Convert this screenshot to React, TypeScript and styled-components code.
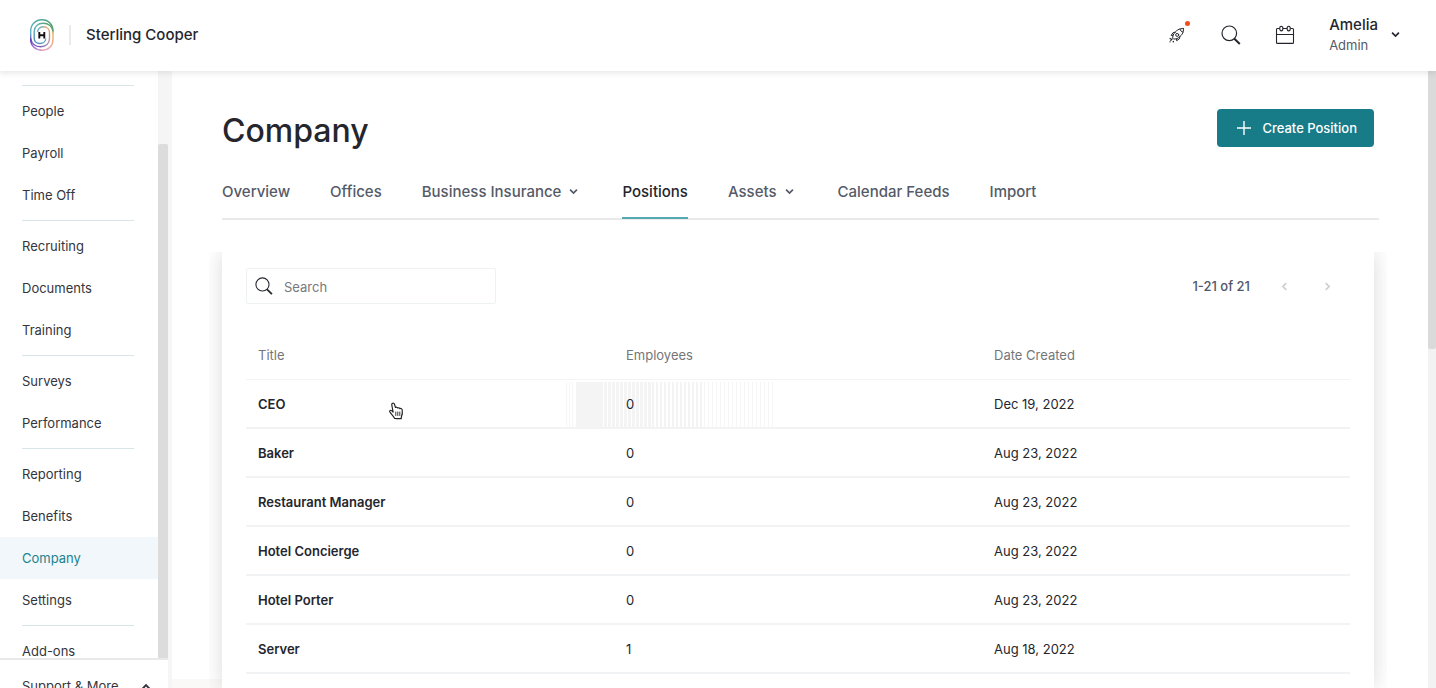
import React from "react";
import styled, { createGlobalStyle, css } from "styled-components";

const Global = createGlobalStyle`
  *, *::before, *::after { box-sizing: border-box; }
  body {
    margin: 0;
    background: #fff;
    color: #25262d;
    font-family: Inter, "Liberation Sans", sans-serif;
    font-size: 13px;
    line-height: 20px;
  }
  a { color: inherit; text-decoration: none; }
  button { font: inherit; color: inherit; background: none; border: 0; padding: 0; cursor: pointer; }
`;

const Page = styled.div`
  height: 100vh;
  display: flex;
  flex-direction: column;
  overflow: hidden;
`;

const Header = styled.header`
  flex: none;
  height: 71px;
  display: flex;
  align-items: center;
  padding: 0 36px 2px 28px;
  background: #fff;
  box-shadow: 0 1px 6px 1px rgba(0, 0, 0, 0.1);
  z-index: 2;
`;

const Brand = styled.a`
  display: flex;
  align-items: center;
  font-size: 15px;
  font-weight: 500;
`;

const BrandDivider = styled.span`
  width: 2px;
  height: 20px;
  margin: 0 15px 0 14px;
  background: #ebebed;
`;

const HeaderActions = styled.div`
  margin-left: auto;
  display: flex;
  align-items: center;
  gap: 30px;
`;

const IconButton = styled.button`
  position: relative;
  width: 24px;
  height: 24px;
  display: grid;
  place-items: center;
`;

const Dot = styled.span`
  position: absolute;
  top: -2px;
  right: -1px;
  width: 5px;
  height: 5px;
  border-radius: 50%;
  background: #f04e16;
`;

const Account = styled.button`
  display: flex;
  align-items: center;
  gap: 13px;
  margin-left: 2px;
  text-align: left;
`;

const AccountName = styled.span`
  display: block;
  font-size: 15px;
  font-weight: 500;
`;

const AccountRole = styled.span`
  display: block;
  color: #555a68;
`;

const Body = styled.div`
  flex: 1;
  min-height: 0;
  display: flex;
`;

const Sidebar = styled.aside`
  flex: none;
  width: 168px;
  display: flex;
  flex-direction: column;
`;

const SidebarScroll = styled.div`
  flex: 1;
  min-height: 0;
  display: flex;
  overflow: hidden;
`;

const Nav = styled.nav`
  flex: 1;
  padding-top: 10px;
`;

const NavGroup = styled.div`
  &::before {
    content: "";
    display: block;
    height: 1px;
    margin: 4px 24px 4px 22px;
    background: #d7e5e9;
  }
`;

const NavLink = styled.a<{ $active?: boolean }>`
  display: flex;
  align-items: center;
  height: 42px;
  padding-left: 22px;
  color: ${(p) => (p.$active ? "#1b8390" : "#34353c")};
  background: ${(p) => (p.$active ? "#f1f7fa" : "transparent")};
`;

const SidebarTrack = styled.div`
  width: 10px;
  padding-top: 73px;
  display: flex;
  background: #f5f5f5;
  &::before {
    content: "";
    flex: 1;
    background: #dcdcdc;
    border-radius: 2px 2px 0 0;
  }
`;

const Support = styled.button`
  flex: none;
  height: 30px;
  overflow: hidden;
  display: flex;
  align-items: flex-start;
  justify-content: space-between;
  padding: 16px 17px 0 22px;
  border-top: 2px solid #e9e9e9;
  color: #34353c;
  svg { margin-top: 6px; }
`;

const Main = styled.main`
  flex: 1;
  min-width: 0;
  display: flex;
  flex-direction: column;
  padding: 38px 54px 0 50px;
  border-left: 4px solid #f6f6f6;
  background: linear-gradient(#faf9f8, #faf9f8) left bottom / 50px 9px no-repeat;
`;

const TitleBar = styled.div`
  flex: none;
  display: flex;
  justify-content: space-between;
  align-items: flex-start;
`;

const Title = styled.h1`
  margin: 2px 0 0;
  font-size: 32px;
  line-height: 40px;
  font-weight: 500;
`;

const CreateButton = styled.button`
  display: flex;
  align-items: center;
  gap: 11px;
  height: 38px;
  padding: 0 17px 0 20px;
  border-radius: 4px;
  color: #fff;
  background: #187b88;
  font-weight: 500;
`;

const Tabs = styled.nav`
  flex: none;
  display: flex;
  gap: 40px;
  height: 48px;
  margin: 21px -5px 0 0;
  border-bottom: 2px solid #e9e9ea;
`;

const Tab = styled.a<{ $active?: boolean }>`
  display: flex;
  align-items: center;
  height: 47px;
  gap: 8px;
  padding-bottom: 8px;
  font-size: 15px;
  font-weight: 500;
  color: #555a68;
  white-space: nowrap;
  svg { margin-right: 4px; }
  ${(p) =>
    p.$active &&
    css`
      color: #25262d;
      border-bottom: 2px solid #55a9b3;
      padding-bottom: 6px;
    `}
`;

const CardClip = styled.div`
  flex: 1;
  min-height: 0;
  display: flex;
  overflow: hidden;
  margin: 32px -13px 0;
  padding: 0 13px;
`;

const Card = styled.section`
  flex: 1;
  min-width: 0;
  padding: 16px 24px 0;
  background: #fff;
  box-shadow: 0 0 20px rgba(0, 0, 0, 0.15);
`;

const Toolbar = styled.div`
  display: flex;
  align-items: center;
  justify-content: space-between;
`;

const SearchBox = styled.label`
  display: flex;
  align-items: center;
  gap: 11px;
  width: 250px;
  height: 36px;
  padding: 0 8px;
  border: 1px solid #eff2f3;
  border-radius: 2px;
`;

const SearchInput = styled.input`
  flex: 1;
  min-width: 0;
  padding: 2px 0 0;
  border: 0;
  outline: 0;
  font: inherit;
  background: none;
  &::placeholder { color: #77787c; opacity: 1; }
`;

const Pager = styled.div`
  display: flex;
  align-items: center;
  gap: 19px;
  padding-right: 11px;
  font-weight: 500;
  color: #50566a;
  button { color: #cfcfd2; }
`;

const PageCount = styled.span`
  margin-right: 3px;
`;

const Table = styled.table`
  width: 100%;
  margin-top: 27px;
  table-layout: fixed;
  border-collapse: separate;
  border-spacing: 0;
`;

const HeadCell = styled.th`
  height: 49px;
  padding: 0 12px;
  border-bottom: 1px solid #f3f4f4;
  text-align: left;
  font-weight: 400;
  color: #75767a;
`;

const Row = styled.tr<{ $hover?: boolean }>`
  ${(p) =>
    p.$hover &&
    css`
      background:
        linear-gradient(#f4f4f4, #f4f4f4) 330px 2px / 24px 45px no-repeat,
        repeating-linear-gradient(90deg, #f4f4f4 0 3px, #fff 3px 4px) 354px 2px / 52px 45px no-repeat,
        repeating-linear-gradient(90deg, #f4f4f4 0 2px, #fff 2px 4px) 406px 2px / 52px 45px no-repeat,
        repeating-linear-gradient(90deg, #f6f6f6 0 1px, #fff 1px 4px) 458px 2px / 69px 45px no-repeat,
        repeating-linear-gradient(90deg, #f6f6f6 0 1px, #fff 1px 3px) 320px 2px / 9px 45px no-repeat;
    `}
`;

const Cell = styled.td`
  height: 49px;
  padding: 1px 12px 0;
  border-bottom: 2px solid #f1f3f4;
  color: #25262d;
`;

const TitleCell = styled(Cell)`
  font-weight: 600;
`;

const PageTrack = styled.div`
  flex: none;
  width: 8px;
  background: #f2f2f2;
  &::before {
    content: "";
    display: block;
    height: 45%;
    border-radius: 0 0 2px 2px;
    background: #dadada;
  }
`;

const Pointer = styled.svg`
  position: absolute;
  left: 388px;
  top: 401px;
  z-index: 3;
`;

const Chevron = ({ dir = "down", size = 8 }: { dir?: "down" | "up" | "left" | "right"; size?: number }) => {
  const d = {
    down: "M1.2 3 5 6.8 8.8 3",
    up: "M1.2 7 5 3.2 8.8 7",
    left: "M7 1.2 3.2 5 7 8.8",
    right: "M3 1.2 6.8 5 3 8.8",
  }[dir];
  return (
    <svg width={size} height={size} viewBox="0 0 10 10" fill="none" stroke="currentColor" strokeWidth="1.9" aria-hidden="true">
      <path d={d} />
    </svg>
  );
};

const SearchIcon = ({ size }: { size: number }) => (
  <svg width={size} height={size} viewBox="0 0 20 20" fill="none" stroke="#25262d" aria-hidden="true">
    <circle cx="8.3" cy="8.3" r="7.3" strokeWidth="1.2" />
    <path d="m13.4 13.8 5.4 5.2" strokeWidth="2" />
  </svg>
);

const Logo = () => (
  <svg width="27" height="34" viewBox="0 0 27 34" fill="none" aria-hidden="true">
    <defs>
      <linearGradient id="left" x1="13" y1="1" x2="13" y2="33" gradientUnits="userSpaceOnUse">
        <stop offset="0" stopColor="#4fa9a0" />
        <stop offset="0.45" stopColor="#62b0cc" />
        <stop offset="0.7" stopColor="#5b35bd" />
        <stop offset="1" stopColor="#d59ad6" />
      </linearGradient>
      <linearGradient id="right" x1="13" y1="1" x2="13" y2="33" gradientUnits="userSpaceOnUse">
        <stop offset="0" stopColor="#4aa58f" />
        <stop offset="0.25" stopColor="#4c9a5c" />
        <stop offset="0.5" stopColor="#eeb063" />
        <stop offset="1" stopColor="#eba4b8" />
      </linearGradient>
      <linearGradient id="across" x1="4" y1="24" x2="23" y2="12" gradientUnits="userSpaceOnUse">
        <stop offset="0" stopColor="#6540bd" />
        <stop offset="0.5" stopColor="#a58bb5" />
        <stop offset="1" stopColor="#eba95e" />
      </linearGradient>
      <linearGradient id="core" x1="6" y1="22" x2="22" y2="8" gradientUnits="userSpaceOnUse">
        <stop offset="0" stopColor="#4f8fb5" />
        <stop offset="0.5" stopColor="#6fb3bd" />
        <stop offset="1" stopColor="#58a06a" />
      </linearGradient>
    </defs>
    <g strokeWidth="1.4">
      <path d="M14 32.300C7.500 32.300 2.700 28 2.700 21.500V13C2.700 6.500 7.500 1.800 14 1.800" stroke="url(#left)" />
      <path d="M14 1.800c6.500 0 11 4.700 11 11.200v8.500c0 6.500-4.500 10.800-11 10.800" stroke="url(#right)" />
      <path d="M2.700 20.500c.8 5 4.800 8.300 10 8.300 5 0 8.800-3.300 8.800-8.300V14.500c0-3.300-2.500-5.700-6-5.700" stroke="url(#across)" />
      <path d="M25 13.500C24.300 8.500 20.500 5.300 15.200 5.300 10 5.300 6.200 8.700 6.200 13.500v6.700c0 3 2.300 5.300 5.600 5.300 3.500 0 5.900-2.200 5.900-5" stroke="url(#core)" />
      <path d="M15.500 8.800c-3.500 0-5.900 2.200-5.900 5.200" stroke="url(#core)" />
    </g>
    <path d="M11.300 14v6.400M16.300 14v6.400M11.300 17.200h5" stroke="#111" strokeWidth="1.900" />
  </svg>
);

const Rocket = () => (
  <svg width="16" height="16" viewBox="0 0 16 16" fill="none" stroke="#25262d" strokeWidth="1" strokeLinejoin="round" strokeLinecap="round" aria-hidden="true">
    <path d="M14.400 1.600C10.500 1.200 7 3 4 8.300l-.3 2.900.9.900 3-.3C12.800 9 15 5.500 14.400 1.600Z" />
    <path d="M11 2.200c.4 1.500 1.300 2.400 2.900 2.900M6.300 5.100 4 5.700 2.200 8.400l1.800-.1M10.900 9.500l-.6 2.400-2.700 1.800v-1.900" />
    <circle cx="8.200" cy="7.900" r="1.500" />
    <path d="m3 12-1.200 1.200M1.300 11.400l-.2.200M4.400 14.500l-.2.200M1 14.800h.1" strokeWidth="1.300" />
  </svg>
);

const CalendarIcon = () => (
  <svg width="20" height="20" viewBox="0 0 20 20" fill="none" stroke="#25262d" strokeWidth="1.100" aria-hidden="true">
    <path d="M4.500 3.500H2.300C1.700 3.500 1.500 4 1.500 4.500v12.900c0 .6.300 1 .9 1h15.200c.6 0 .9-.4.900-1V4.500c0-.6-.3-1-.9-1h-2.100M8 3.500h4M1.500 9.500h17" />
    <ellipse cx="6.300" cy="3.600" rx="1.600" ry="2.300" />
    <ellipse cx="13.700" cy="3.600" rx="1.600" ry="2.300" />
  </svg>
);

const groups = [
  ["People", "Payroll", "Time Off"],
  ["Recruiting", "Documents", "Training"],
  ["Surveys", "Performance"],
  ["Reporting", "Benefits", "Company", "Settings"],
  ["Add-ons"],
];

const tabs: { label: string; menu?: boolean }[] = [
  { label: "Overview" },
  { label: "Offices" },
  { label: "Business Insurance", menu: true },
  { label: "Positions" },
  { label: "Assets", menu: true },
  { label: "Calendar Feeds" },
  { label: "Import" },
];

const positions: [string, number, string][] = [
  ["CEO", 0, "Dec 19, 2022"],
  ["Baker", 0, "Aug 23, 2022"],
  ["Restaurant Manager", 0, "Aug 23, 2022"],
  ["Hotel Concierge", 0, "Aug 23, 2022"],
  ["Hotel Porter", 0, "Aug 23, 2022"],
  ["Server", 1, "Aug 18, 2022"],
];

export default function App() {
  return (
    <Page>
      <Global />
      <Header>
        <Brand href="#">
          <Logo />
          <BrandDivider />
          Sterling Cooper
        </Brand>
        <HeaderActions>
          <IconButton aria-label="What's new"><Rocket /><Dot /></IconButton>
          <IconButton aria-label="Search"><SearchIcon size={20} /></IconButton>
          <IconButton aria-label="Calendar"><CalendarIcon /></IconButton>
          <Account>
            <span>
              <AccountName>Amelia</AccountName>
              <AccountRole>Admin</AccountRole>
            </span>
            <Chevron size={9} />
          </Account>
        </HeaderActions>
      </Header>
      <Body>
        <Sidebar>
          <SidebarScroll>
            <Nav aria-label="Main">
              {groups.map((items) => (
                <NavGroup key={items[0]}>
                  {items.map((item) => (
                    <NavLink key={item} href="#" $active={item === "Company"}>{item}</NavLink>
                  ))}
                </NavGroup>
              ))}
            </Nav>
            <SidebarTrack />
          </SidebarScroll>
          <Support>Support &amp; More <Chevron dir="up" size={10} /></Support>
        </Sidebar>
        <Main>
          <TitleBar>
            <Title>Company</Title>
            <CreateButton>
              <svg width="14" height="14" viewBox="0 0 14 14" stroke="#fff" strokeWidth="1.400" aria-hidden="true"><path d="M7 0v14M0 7h14" /></svg>
              Create Position
            </CreateButton>
          </TitleBar>
          <Tabs aria-label="Company sections">
            {tabs.map((t) => (
              <Tab key={t.label} href="#" $active={t.label === "Positions"}>
                {t.label}
                {t.menu && <Chevron size={9} />}
              </Tab>
            ))}
          </Tabs>
          <CardClip>
            <Card>
              <Toolbar>
                <SearchBox>
                  <SearchIcon size={18} />
                  <SearchInput type="text" placeholder="Search" aria-label="Search positions" />
                </SearchBox>
                <Pager>
                  <PageCount>1-21 of 21</PageCount>
                  <IconButton aria-label="Previous page"><Chevron dir="left" size={9} /></IconButton>
                  <IconButton aria-label="Next page"><Chevron dir="right" size={9} /></IconButton>
                </Pager>
              </Toolbar>
              <Table>
                <thead>
                  <tr>
                    <HeadCell>Title</HeadCell>
                    <HeadCell>Employees</HeadCell>
                    <HeadCell>Date Created</HeadCell>
                  </tr>
                </thead>
                <tbody>
                  {positions.map(([title, count, date], i) => (
                    <Row key={title} $hover={i === 0}>
                      <TitleCell>{title}</TitleCell>
                      <Cell>{count}</Cell>
                      <Cell>{date}</Cell>
                    </Row>
                  ))}
                </tbody>
              </Table>
            </Card>
          </CardClip>
        </Main>
        <PageTrack />
      </Body>
      <Pointer width="16" height="20" viewBox="0 0 16 20" fill="#fff" stroke="#222" strokeWidth="1.200" strokeLinejoin="round" strokeLinecap="round" aria-hidden="true">
        <path d="M4.200 2.600c.8-.8 2-.3 2.300.7l1 3.200c.8-.6 1.900-.3 2.200.5.8-.5 1.800-.2 2.100.6 1.200-.4 2.200.2 2.400 1.400.3 2 .3 4.200-.7 6.300l-.3 2.300-3-.1-1.200.1-2.400-.1c-.6-1.800-3-3.700-4.800-6.700-.6-1.200.8-2 1.800-1.200l1.500 1.400-1.300-7c-.1-.6 0-1.100.4-1.400Z" />
        <path d="M7.800 11v3.500M9.800 11v3.500M11.800 11v3.500" strokeWidth="0.900" />
      </Pointer>
    </Page>
  );
}
